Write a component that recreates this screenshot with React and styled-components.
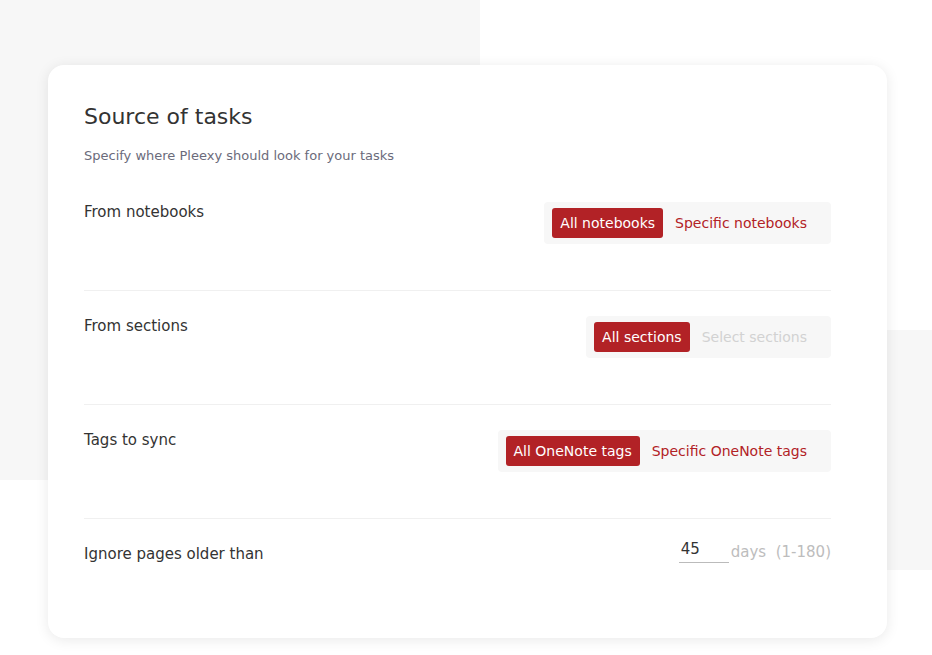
import React from "react";
import styled, { createGlobalStyle } from "styled-components";

const Global = createGlobalStyle`
  html, body { margin: 0; padding: 0; background: #fff; }
  body { font-family: "DejaVu Sans", "Noto Sans", sans-serif; }
`;

const Page = styled.div`
  position: relative;
  width: 932px;
  height: 655px;
  overflow: hidden;
  padding: 65px 0 0 48px;
  box-sizing: border-box;
`;
const Shape = styled.div`
  position: absolute;
  background: #f7f7f7;
  left: ${p => p.$x}px; top: ${p => p.$y}px; width: ${p => p.$w}px; height: ${p => p.$h}px;
`;
const Card = styled.div`
  position: relative;
  width: 839px;
  height: 573px;
  box-sizing: border-box;
  background: #fff;
  border-radius: 16px;
  box-shadow: 0 2px 14px rgba(0,0,0,0.09);
  padding: 37px 56px 0 36px;
`;
const Title = styled.h1`
  margin: 0;
  font-size: 22px;
  font-weight: 400;
  color: #333;
  line-height: 30px;
`;
const Sub = styled.p`
  margin: 15px 0 0;
  font-size: 13px;
  color: #6b6b7b;
  line-height: 18px;
`;
const Row = styled.div`
  display: flex;
  justify-content: space-between;
  align-items: flex-start;
  padding: ${p => (p.$first ? "37px" : "25px")} 0 46px;
  border-bottom: ${p => (p.$last ? "none" : "1px solid #f0f0f0")};
`;
const Label = styled.div`
  font-size: 15px;
  color: #333;
  line-height: 20px;
  margin-top: 0;
`;
const Seg = styled.div`
  display: flex;
  gap: 4px;
  background: #f7f7f7;
  border-radius: 4px;
  padding: 6px 8px;
`;
const Btn = styled.div`
  height: 30px;
  line-height: 30px;
  padding: 0 8px;
  border-radius: 3px;
  font-size: 14px;
  white-space: nowrap;
  background: ${p => (p.$on ? "#b22226" : "transparent")};
  color: ${p => (p.$on ? "#fff" : p.$disabled ? "#d2d2d2" : "#b22226")};
  padding-right: ${p => (p.$on ? "8px" : "16px")};
`;
const Days = styled.div`
  display: flex;
  align-items: flex-end;
  gap: 2px;
  font-size: 15px;
  color: #bdbdbd;
  margin-top: -4px;
`;
const Input = styled.div`
  width: 50px;
  border-bottom: 1px solid #bbb;
  color: #333;
  padding: 0 0 4px 2px;
  box-sizing: border-box;
`;
const Hint = styled.span`padding-bottom: 2px;`;

const rows = [
  ["From notebooks", "All notebooks", "Specific notebooks", false],
  ["From sections", "All sections", "Select sections", true],
  ["Tags to sync", "All OneNote tags", "Specific OneNote tags", false],
];

export default function App() {
  return (
    <Page>
      <Global />
      <Shape $x={0} $y={0} $w={480} $h={480} />
      <Shape $x={860} $y={330} $w={72} $h={240} />
      <Card>
        <Title>Source of tasks</Title>
        <Sub>Specify where Pleexy should look for your tasks</Sub>
        {rows.map(([l, a, b, d], i) => (
          <Row key={l} $first={i === 0}>
            <Label>{l}</Label>
            <Seg>
              <Btn $on>{a}</Btn>
              <Btn $disabled={d}>{b}</Btn>
            </Seg>
          </Row>
        ))}
        <Row $last>
          <Label>Ignore pages older than</Label>
          <Days>
            <Input>45</Input>
            <Hint>days&nbsp;&nbsp;(1-180)</Hint>
          </Days>
        </Row>
      </Card>
    </Page>
  );
}
